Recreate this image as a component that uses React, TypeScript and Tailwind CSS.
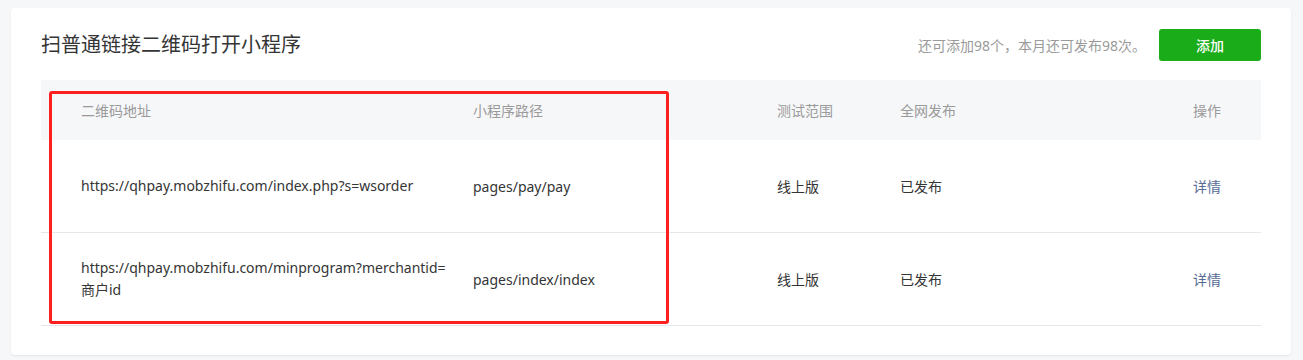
import React from "react";

const rows = [
  {
    url: ["https://qhpay.mobzhifu.com/index.php?s=wsorder"],
    path: "pages/pay/pay",
  },
  {
    url: ["https://qhpay.mobzhifu.com/minprogram?merchantid=", "商户id"],
    path: "pages/index/index",
  },
];

export default function App() {
  return (
    <div
      className="w-full h-[360px] bg-[#f6f7f9] pt-[8px] pl-[11px] pr-[12px] overflow-hidden"
      style={{ fontFamily: '"Noto Sans", "Noto Sans CJK SC", sans-serif' }}
    >
      <div className="bg-white rounded-[4px] shadow-[0_1px_2px_rgba(0,0,0,0.08)] px-[30px] pt-[21px] pb-[29px]">
        <div className="flex items-center justify-between h-[32px] mb-[19px]">
          <h1 className="text-[20px] leading-[32px] text-[#353535] font-normal">
            扫普通链接二维码打开小程序
          </h1>
          <div className="flex items-center gap-[13px]">
            <span className="text-[14px] text-[#9a9a9a]">
              还可添加98个，本月还可发布98次。
            </span>
            <button className="w-[102px] h-[32px] rounded-[3px] bg-[#1aad19] text-white text-[14px] font-medium">
              添加
            </button>
          </div>
        </div>

        <div className="relative">
          <div className="grid grid-cols-[432px_304px_123px_293px_1fr] h-[60px] items-center bg-[#f6f7f9] text-[14px] text-[#9a9a9a]">
            <div className="pl-[40px]">二维码地址</div>
            <div>小程序路径</div>
            <div>测试范围</div>
            <div>全网发布</div>
            <div>操作</div>
          </div>
          {rows.map((r, i) => (
            <div
              key={i}
              className="grid grid-cols-[432px_304px_123px_293px_1fr] h-[93px] items-center border-b border-[#e7e7eb] text-[14px] text-[#353535]"
            >
              <div className="pl-[40px] leading-[22px]">
                {r.url.map((l, j) => (
                  <div key={j}>{l}</div>
                ))}
              </div>
              <div>{r.path}</div>
              <div>线上版</div>
              <div>已发布</div>
              <div>
                <a className="text-[#576b95] cursor-pointer">详情</a>
              </div>
            </div>
          ))}
          <div className="absolute left-[8px] top-[11px] w-[620px] h-[233px] border-[3px] border-[#ff1f1f] rounded-[3px] pointer-events-none" />
        </div>
      </div>
    </div>
  );
}
